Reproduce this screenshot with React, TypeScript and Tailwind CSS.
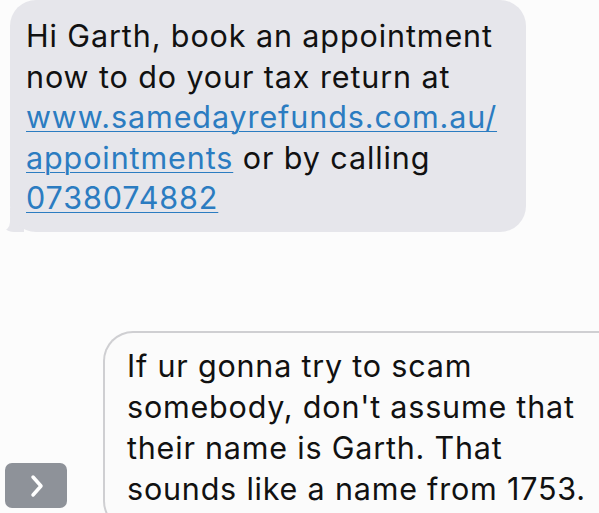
import React from 'react';

const font = { fontFamily: 'Inter, "Liberation Sans", Arial, sans-serif' };

const App = () => {
  return (
    <div className="w-[599px] h-[513px] overflow-hidden bg-[#fcfcfc] flex flex-col" style={font}>
      <div className="relative w-[526px] h-[232px] shrink-0">
        <div className="absolute left-0 bottom-0 w-[24px] h-[24px] bg-[#e6e6eb] rounded-bl-[14px]" />
        <div className="absolute left-0 bottom-0 w-[10px] h-[26px] bg-[#fcfcfc] rounded-br-[12px]" />
        <div className="relative ml-[10px] h-full bg-[#e6e6eb] rounded-[26px] pl-[16px] pt-[16px] text-[30.5px] leading-[40.5px] text-[#111] tracking-[0.9px] whitespace-nowrap">
          <div>Hi Garth, book an appointment</div>
          <div>now to do your tax return at</div>
          <div>
            <span className="text-[#2b7cc1] underline decoration-1 underline-offset-[3px]">www.samedayrefunds.com.au/</span>
          </div>
          <div>
            <span className="text-[#2b7cc1] underline decoration-1 underline-offset-[3px]">appointments</span> or by calling
          </div>
          <div>
            <span className="text-[#2b7cc1] underline decoration-1 underline-offset-[3px]">0738074882</span>
          </div>
        </div>
      </div>

      <div className="flex-1 flex items-end gap-[36px] pt-[99px] pl-[5px]">
        <div className="w-[62px] h-[45px] mb-[5px] shrink-0 rounded-[7px] bg-[#8e9299] flex items-center justify-center">
          <svg width="24" height="26" viewBox="0 0 24 26" fill="none">
            <path d="M9 4l8 9-8 9" stroke="white" strokeWidth="3.5" strokeLinecap="round" strokeLinejoin="round" />
          </svg>
        </div>
        <div className="flex-1 h-[200px] -mb-[18px] -mr-[40px] border-[2px] border-r-0 border-[#cfcfd2] rounded-[30px] bg-[#fbfbfb] pl-[22px] pt-[12px] text-[30.5px] leading-[41px] text-[#111] tracking-[0.8px] whitespace-nowrap">
          <div>If ur gonna try to scam</div>
          <div>somebody, don't assume that</div>
          <div>their name is Garth. That</div>
          <div>sounds like a name from 1753.</div>
        </div>
      </div>
    </div>
  );
};

export default App;
